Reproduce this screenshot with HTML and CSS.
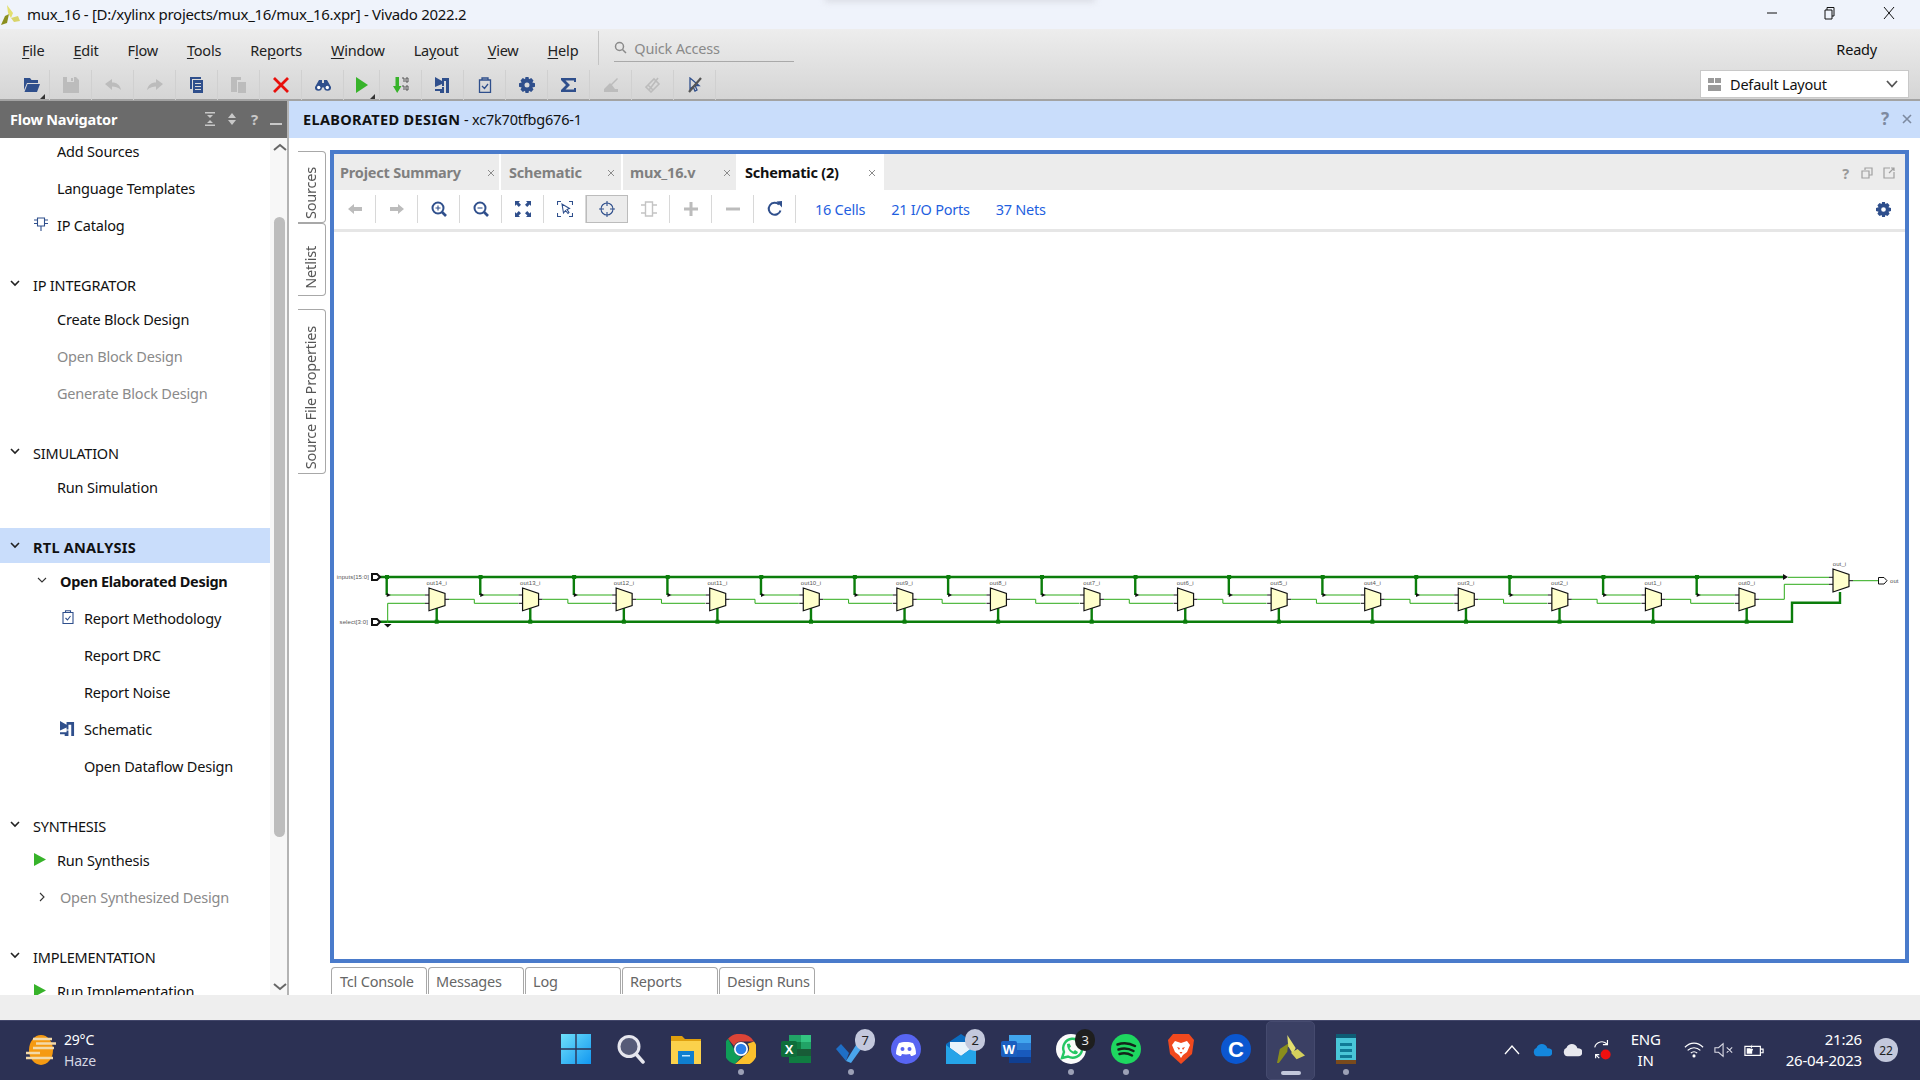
FILE: index.html
```html
<!DOCTYPE html>
<html lang="en">
<head>
<meta charset="utf-8">
<title>mux_16 - Vivado 2022.2</title>
<link rel="stylesheet" href="styles.css">
</head>
<body>
<svg class="defs" width="0" height="0">
  <defs>
    <g id="cell">
      <path class="w-thick" d="M386.7 577V595M436.7 608V621.7"/>
      <rect class="node" x="385" y="575" width="4" height="4"/>
      <rect class="node" x="434.7" y="619.7" width="4" height="4"/>
      <path class="w-black" d="M386.7 593V597L391 595Z"/>
      <path class="w-thin" d="M390 595H425"/>
      <path class="w-stub" d="M425 595H429M425 603.3H429M445 599.3H449"/>
      <path class="mux" d="M429 588L445 593.5V605.5L429 610.7Z"/>
    </g>
    <path id="wire" class="w-thin" d="M449 599.3H474.3V603.3H518"/>
    <linearGradient id="winG" x1="0" y1="0" x2="1" y2="1"><stop offset="0" stop-color="#6fe0fb"/><stop offset="1" stop-color="#1297f0"/></linearGradient>
  </defs>
</svg>

<header class="titlebar">
  <svg class="applogo" viewBox="0 0 20 20"><path fill="#8a8f1f" d="M1 20L5 11L9 9L7 18Z"/><path fill="#e3df6e" d="M7 0L13 8L11 13L8 8Z"/><path fill="#d8d46a" d="M11 13L18 11L20 16L14 17Z"/></svg>
  <span class="titletext">mux_16 - [D:/xylinx projects/mux_16/mux_16.xpr] - Vivado 2022.2</span>
  <div class="winbtns">
    <svg class="winbtn" viewBox="0 0 14 14"><path d="M2 7H12" class="win-s"/></svg>
    <svg class="winbtn" viewBox="0 0 14 14"><path d="M3 4H10V13H3ZM5 4V1.5H12V10H10" class="win-s"/></svg>
    <svg class="winbtn last" viewBox="0 0 14 14"><path d="M2 1L12 13M12 1L2 13" class="win-s"/></svg>
  </div>
  <div class="topshadow"></div>
</header>

<section class="menubar">
  <div class="menurow">
    <nav class="menus">
      <span><u>F</u>ile</span><span><u>E</u>dit</span><span>F<u>l</u>ow</span><span><u>T</u>ools</span><span>Re<u>p</u>orts</span><span><u>W</u>indow</span><span>La<u>y</u>out</span><span><u>V</u>iew</span><span><u>H</u>elp</span>
    </nav>
    <div class="quick">
      <svg class="qicon" viewBox="0 0 14 14"><circle cx="5.5" cy="5.5" r="4" class="q-s"/><path d="M8.5 8.5L12 12" class="q-s"/></svg>
      <span>Quick Access</span>
    </div>
    <span class="ready">Ready</span>
  </div>
  <div class="toolrow">
    <div class="tools">
      <div class="tool narrow">
        <svg class="ic16" viewBox="0 0 16 16"><path class="f-b" d="M0 1H6L7.500 3H14V6H3L0 13Z"/><path class="f-b" d="M3.500 7H16L13 15H0.500Z"/></svg>
        <i class="drop"></i>
      </div>
      <div class="tool"><svg class="ic16" viewBox="0 0 16 16"><path class="f-d" d="M0 0H4V5H11V0H13L16 3V16H0ZM8 1H10V4H8Z"/></svg></div>
      <div class="tool"><svg class="ic16" viewBox="0 0 16 16"><path class="f-d" d="M0 7L7 2V5.500C12 5.500 15 8 16 13C13 10 10 9.500 7 9.500V13Z"/></svg></div>
      <div class="tool"><svg class="ic16" viewBox="0 0 16 16"><path class="f-d" d="M16 7L9 2V5.500C4 5.500 1 8 0 13C3 10 6 9.500 9 9.500V13Z"/></svg></div>
      <div class="tool"><svg class="ic16" viewBox="0 0 16 16"><path class="f-b" d="M1 0H12V2H3V12H1Z"/><path class="f-b" d="M4 3H14V16H4ZM6 6V7H12V6ZM6 9V10H12V9ZM6 12V13H12V12Z"/></svg></div>
      <div class="tool"><svg class="ic16" viewBox="0 0 16 16"><path class="f-d" d="M0 0H10V3H6V15H0Z"/><path class="f-d" d="M7 5H15V16H7Z"/></svg></div>
      <div class="tool"><svg class="ic16" viewBox="0 0 16 16"><path d="M1 1L15 15M15 1L1 15" class="x-red"/></svg></div>
      <div class="tool"><svg class="ic16" viewBox="0 0 16 16"><path class="f-b" d="M4 3H7V6H9V3H12L16 10A3.500 3.500 0 1 1 9 10.500H7A3.500 3.500 0 1 1 0 10Z"/><circle cx="3.700" cy="10.500" r="1.700" fill="#fff"/><circle cx="12.300" cy="10.500" r="1.700" fill="#fff"/></svg></div>
      <div class="tool narrow"><svg class="ic16" viewBox="0 0 16 16"><path class="f-g" d="M2 0L14 8L2 16Z"/></svg><i class="drop"></i></div>
      <div class="tool"><svg class="ic16" viewBox="0 0 16 16"><path class="f-g" d="M2.500 0H6V9H8.500L4.200 16L0 9H2.500Z"/><path class="s-n" d="M9 1H11V5M13 1H15V5H13ZM9 9H11V13M13 9H15V13H13Z"/></svg></div>
      <div class="tool"><svg class="ic16" viewBox="0 0 16 16"><path class="f-b" d="M0 0L7 4V1H14V16H11V4H9V9H7V7L0 10ZM0 12H7V10H9V16H5V14H0Z"/></svg></div>
      <div class="tool"><svg class="ic16" viewBox="0 0 16 16"><path class="s-b" d="M2.500 3H13.500V15.500H2.500ZM5 3V1H11V3ZM5 9L7.500 11.500L11 7"/></svg></div>
      <div class="tool"><svg class="ic16" viewBox="0 0 16 16"><path class="f-b" fill-rule="evenodd" d="M6.500 0H9.500L10 2.200L12.200 1.100L14.500 3.500L13.300 5.600L16 6.300V9.700L13.300 10.400L14.500 12.500L12.200 14.900L10 13.800L9.500 16H6.500L6 13.800L3.800 14.900L1.500 12.500L2.700 10.400L0 9.700V6.300L2.700 5.600L1.500 3.500L3.800 1.100L6 2.200ZM8 5.500A2.500 2.500 0 1 0 8 10.500A2.500 2.500 0 1 0 8 5.500Z"/></svg></div>
      <div class="tool"><svg class="ic16" viewBox="0 0 16 16"><path class="f-b" d="M0 1H15V5H13V3.500H4.500L9 8L4.500 12.500H13V11H15V15H0V13L5 8L0 3Z"/></svg></div>
      <div class="tool"><svg class="ic16" viewBox="0 0 16 16"><path class="f-d" d="M4 3L8 7L14 1L15 2L9 8L12 12H15V15H1V12L7 6Z"/></svg></div>
      <div class="tool"><svg class="ic16" viewBox="0 0 16 16"><path class="s-d" d="M1 10L9 2L14 7L6 15ZM4 13L13 1M3 8L8 13"/></svg></div>
      <div class="tool"><svg class="ic16" viewBox="0 0 16 16"><path class="s-b" d="M3 1V12L6 9.500L8 14L10 13L8 8.500H12Z"/><path class="s-gr" d="M2 15L14 1"/></svg></div>
    </div>
    <div class="layoutbox">
      <svg class="lay-ic" viewBox="0 0 13 13"><path fill="#9a9a9a" d="M0 0H6V5H0ZM7 0H13V5H7ZM0 7H13V13H0Z"/></svg>
      <span class="lay-text">Default Layout</span>
      <svg class="lay-ch" viewBox="0 0 12 8"><path d="M1 1L6 6.500L11 1" class="ch-s"/></svg>
    </div>
  </div>
</section>

<main class="app">
  <aside class="nav">
    <div class="navhead">
      <span class="navtitle">Flow Navigator</span>
      <svg class="nh-ic" viewBox="0 0 12 14"><path fill="#c8c8c8" d="M1 0H11V1.500H1ZM3 3H9L6 6ZM3 11H9L6 8ZM1 12.500H11V14H1Z"/></svg>
      <svg class="nh-ic" viewBox="0 0 12 14"><path fill="#c8c8c8" d="M2 6L6 1L10 6ZM2 8L6 13L10 8Z"/></svg>
      <span class="nh-q">?</span>
      <span class="nh-min"></span>
    </div>
    <div class="navbody">
      <div class="navlist">
        <div class="row">Add Sources</div>
        <div class="row">Language Templates</div>
        <div class="row"><svg class="row-ic" viewBox="0 0 14 14"><path class="s-b1" d="M3.500 1H10.500V9H3.500ZM7 9V14M0 3H3.500M0 6.500H3.500M10.500 3H14M10.500 6.500H14"/></svg>IP Catalog</div>

        <div class="head"><svg class="chev" viewBox="0 0 10 7"><path class="ch-b" d="M1 1L5 5L9 1"/></svg>IP INTEGRATOR</div>
        <div class="row">Create Block Design</div>
        <div class="row dim">Open Block Design</div>
        <div class="row dim">Generate Block Design</div>

        <div class="head"><svg class="chev" viewBox="0 0 10 7"><path class="ch-b" d="M1 1L5 5L9 1"/></svg>SIMULATION</div>
        <div class="row">Run Simulation</div>

        <div class="head active"><svg class="chev" viewBox="0 0 10 7"><path class="ch-b" d="M1 1L5 5L9 1"/></svg>RTL ANALYSIS</div>
        <div class="row sub bold"><svg class="chev2" viewBox="0 0 10 7"><path class="ch-t" d="M1 1L5 5L9 1"/></svg>Open Elaborated Design</div>
        <div class="row deep"><svg class="deep-ic" viewBox="0 0 12 14"><path class="s-b1" d="M1 2.500H11V13.500H1ZM3.500 2.500V0.700H8.500V2.500M3.500 8L5.500 10L8.500 6"/></svg>Report Methodology</div>
        <div class="row deep">Report DRC</div>
        <div class="row deep">Report Noise</div>
        <div class="row deep"><svg class="deep-ic wide" viewBox="0 0 16 16"><path class="f-b" d="M0 0L7 4V1H15V16H12V4H9V9H7V7L0 10ZM0 12H7V10H9V16H5V14H0Z"/></svg>Schematic</div>
        <div class="row deep">Open Dataflow Design</div>

        <div class="head"><svg class="chev" viewBox="0 0 10 7"><path class="ch-b" d="M1 1L5 5L9 1"/></svg>SYNTHESIS</div>
        <div class="row"><svg class="play-ic" viewBox="0 0 12 13"><path class="f-g" d="M0 0L12 6.500L0 13Z"/></svg>Run Synthesis</div>
        <div class="row sub dim"><svg class="chev2 side" viewBox="0 0 7 10"><path class="ch-t" d="M1 1L5 5L1 9"/></svg>Open Synthesized Design</div>

        <div class="head"><svg class="chev" viewBox="0 0 10 7"><path class="ch-b" d="M1 1L5 5L9 1"/></svg>IMPLEMENTATION</div>
        <div class="row"><svg class="play-ic" viewBox="0 0 12 13"><path class="f-g" d="M0 0L12 6.500L0 13Z"/></svg>Run Implementation</div>
      </div>
      <div class="scroll">
        <svg class="sc-ch" viewBox="0 0 14 9"><path class="sc-s" d="M1 7L7 2L13 7"/></svg>
        <div class="thumb"></div>
        <svg class="sc-ch down" viewBox="0 0 14 9"><path class="sc-s" d="M1 2L7 7L13 2"/></svg>
      </div>
    </div>
  </aside>

  <div class="right">
    <div class="banner">
      <span><b>ELABORATED DESIGN</b> - xc7k70tfbg676-1</span>
      <span class="ban-q">?</span>
      <svg class="ban-x" viewBox="0 0 10 10"><path class="bx-s" d="M1 1L9 9M9 1L1 9"/></svg>
    </div>
    <div class="work">
      <div class="vtabs">
        <div class="vtab t1"><span>Sources</span></div>
        <div class="vtab t2"><span>Netlist</span></div>
        <div class="vtab t3"><span>Source File Properties</span></div>
      </div>
      <div class="center">
        <div class="frame">
          <div class="tabbar">
            <div class="tab w1"><span class="tt">Project Summary</span><svg class="tx" viewBox="0 0 8 8"><path d="M1 1L7 7M7 1L1 7"/></svg></div>
            <div class="tab w2"><span class="tt">Schematic</span><svg class="tx" viewBox="0 0 8 8"><path d="M1 1L7 7M7 1L1 7"/></svg></div>
            <div class="tab w3"><span class="tt">mux_16.v</span><svg class="tx" viewBox="0 0 8 8"><path d="M1 1L7 7M7 1L1 7"/></svg></div>
            <div class="tab w4 on"><span class="tt">Schematic (2)</span><svg class="tx" viewBox="0 0 8 8"><path d="M1 1L7 7M7 1L1 7"/></svg></div>
            <div class="tabtools">
              <span class="tq">?</span>
              <svg class="tc" viewBox="0 0 12 12"><path d="M4 3V1H11V8H8.500M1 4H8V11H1Z"/></svg>
              <svg class="tc" viewBox="0 0 12 12"><path d="M7 1H1V11H11V5M6 6L11 1M8 1H11V4"/></svg>
            </div>
          </div>
          <div class="subbar">
            <div class="st"><svg class="ic16" viewBox="0 0 16 16"><path class="f-d" d="M1 8L7 3V6H15V10H7V13Z"/></svg></div>
            <div class="st"><svg class="ic16" viewBox="0 0 16 16"><path class="f-d" d="M15 8L9 3V6H1V10H9V13Z"/></svg></div>
            <div class="st"><svg class="ic16" viewBox="0 0 16 16"><circle class="s-b2" cx="7" cy="7" r="5.500"/><path class="s-b1" d="M7 4.500V9.500M4.500 7H9.500"/><path class="s-b3" d="M11 11L15 15"/></svg></div>
            <div class="st"><svg class="ic16" viewBox="0 0 16 16"><circle class="s-b2" cx="7" cy="7" r="5.500"/><path class="s-b1" d="M4.500 7H9.500"/><path class="s-b3" d="M11 11L15 15"/></svg></div>
            <div class="st"><svg class="ic16" viewBox="0 0 16 16"><path class="f-b" d="M0 0H5L3.600 1.400L6 3.800L3.800 6L1.400 3.600L0 5ZM16 0V5L14.600 3.600L12.200 6L10 3.800L12.400 1.400L11 0ZM0 16V11L1.400 12.400L3.800 10L6 12.200L3.600 14.600L5 16ZM16 16H11L12.400 14.600L10 12.200L12.200 10L14.600 12.400L16 11Z"/></svg></div>
            <div class="st"><svg class="ic16" viewBox="0 0 16 16"><path class="s-b1" d="M0.500 4V0.500H4M12 0.500H15.500V4M0.500 12V15.500H4M12 15.500H15.500V12"/><path class="s-b1" d="M5 3L6.500 12L8.500 9.500L11 12.500L12 11.500L10 8.500L12.500 7.500Z"/></svg></div>
            <div class="st pressed"><svg class="ic16" viewBox="0 0 16 16"><circle class="s-b1" cx="8" cy="8" r="6"/><path class="s-b1" d="M8 0V5M8 11V16M0 8H5M11 8H16"/></svg></div>
            <div class="st"><svg class="ic16" viewBox="0 0 16 16"><path class="s-d1" d="M4.500 1H11.500V15H4.500ZM0 4H4.500M0 12H4.500M11.500 4H16M11.500 12H16"/></svg></div>
            <div class="st"><svg class="ic16" viewBox="0 0 16 16"><path class="f-d" d="M6.500 1H9.500V6.500H15V9.500H9.500V15H6.500V9.500H1V6.500H6.500Z"/></svg></div>
            <div class="st"><svg class="ic16" viewBox="0 0 16 16"><path class="f-d" d="M1 6.500H15V9.500H1Z"/></svg></div>
            <div class="st"><svg class="ic16" viewBox="0 0 16 16"><path class="s-b2" d="M13.500 9.500A6 6 0 1 1 12 3.500"/><path class="f-b" d="M9.500 0.500L15 0V6.500Z"/></svg></div>
            <div class="links"><a>16 Cells</a><a>21 I/O Ports</a><a>37 Nets</a></div>
            <svg class="gear" viewBox="0 0 16 16"><path class="f-b" fill-rule="evenodd" d="M6.500 0H9.500L10 2.200L12.200 1.100L14.500 3.500L13.300 5.600L16 6.300V9.700L13.300 10.400L14.500 12.500L12.200 14.900L10 13.800L9.500 16H6.500L6 13.800L3.800 14.900L1.500 12.500L2.700 10.400L0 9.700V6.300L2.700 5.600L1.500 3.500L3.800 1.100L6 2.200ZM8 5.500A2.500 2.500 0 1 0 8 10.500A2.500 2.500 0 1 0 8 5.500Z"/></svg>
          </div>
          <svg class="schem" viewBox="334 232 1571 727" preserveAspectRatio="xMinYMin meet">
            <path class="w-bus" d="M380 577H1785"/>
            <path class="w-bus" d="M380 621.700H1792V602.700H1840V592"/>
            <path class="w-thin" d="M387.700 603.300H425M387.700 603.300V623"/>
            <path class="w-black" d="M384 624H391.500L387.700 627.500Z"/>
            <use href="#cell"/>
            <use href="#wire"/><use href="#cell" x="93.570"/>
            <use href="#wire" x="93.570"/><use href="#cell" x="187.140"/>
            <use href="#wire" x="187.140"/><use href="#cell" x="280.710"/>
            <use href="#wire" x="280.710"/><use href="#cell" x="374.280"/>
            <use href="#wire" x="374.280"/><use href="#cell" x="467.850"/>
            <use href="#wire" x="467.850"/><use href="#cell" x="561.420"/>
            <use href="#wire" x="561.420"/><use href="#cell" x="654.990"/>
            <use href="#wire" x="654.990"/><use href="#cell" x="748.560"/>
            <use href="#wire" x="748.560"/><use href="#cell" x="842.130"/>
            <use href="#wire" x="842.130"/><use href="#cell" x="935.700"/>
            <use href="#wire" x="935.700"/><use href="#cell" x="1029.270"/>
            <use href="#wire" x="1029.270"/><use href="#cell" x="1122.840"/>
            <use href="#wire" x="1122.840"/><use href="#cell" x="1216.410"/>
            <use href="#wire" x="1216.410"/><use href="#cell" x="1309.980"/>
            <path class="w-thin" d="M1759 599.300H1784.300V584.300H1829M1788 577.300H1829M1853 580.700H1878"/>
            <path class="w-stub" d="M1829 577.300H1833M1829 584.300H1833M1849 580.700H1853"/>
            <path class="w-black" d="M1783 574L1788 577L1783 580Z"/>
            <path class="mux" d="M1833 569L1849 574.500V586.500L1833 592Z"/>
            <path class="port out" d="M1878.500 577.500H1884L1887 580.700L1884 584H1878.500Z"/>
            <path class="port" d="M372 574H377L380 577L377 580H372Z"/>
            <path class="port" d="M372 619H377L380 622L377 625H372Z"/>
            <text class="lbl end" x="369" y="579">inputs[15:0]</text>
            <text class="lbl end" x="368" y="624">select[3:0]</text>
            <text class="lbl" x="1890" y="583">out</text>
            <text class="lbl mid" x="1839.500" y="566">out_i</text>
            <text class="lbl mid" x="436.700" y="585">out14_i</text>
            <text class="lbl mid" x="530.300" y="585">out13_i</text>
            <text class="lbl mid" x="623.900" y="585">out12_i</text>
            <text class="lbl mid" x="717.400" y="585">out11_i</text>
            <text class="lbl mid" x="811" y="585">out10_i</text>
            <text class="lbl mid" x="904.600" y="585">out9_i</text>
            <text class="lbl mid" x="998.100" y="585">out8_i</text>
            <text class="lbl mid" x="1091.700" y="585">out7_i</text>
            <text class="lbl mid" x="1185.300" y="585">out6_i</text>
            <text class="lbl mid" x="1278.800" y="585">out5_i</text>
            <text class="lbl mid" x="1372.400" y="585">out4_i</text>
            <text class="lbl mid" x="1466" y="585">out3_i</text>
            <text class="lbl mid" x="1559.500" y="585">out2_i</text>
            <text class="lbl mid" x="1653.100" y="585">out1_i</text>
            <text class="lbl mid" x="1746.700" y="585">out0_i</text>
          </svg>
        </div>
        <div class="btabs">
          <div class="btab">Tcl Console</div>
          <div class="btab">Messages</div>
          <div class="btab">Log</div>
          <div class="btab">Reports</div>
          <div class="btab">Design Runs</div>
        </div>
      </div>
    </div>
  </div>
</main>
<div class="status"></div>

<footer class="taskbar">
  <div class="weather">
    <svg class="wx" viewBox="0 0 32 32"><ellipse cx="16" cy="16" rx="12" ry="15" fill="#f59a12"/><path d="M8 5H27M11 9.500H31M8 14H29M1 19H15M1 24H28" stroke="#f3d9a8" stroke-width="2.400" fill="none"/></svg>
    <div class="wtext"><span>29°C</span><span class="haze">Haze</span></div>
  </div>
  <div class="apps">
    <div class="app-i"><svg class="tb" viewBox="0 0 30 30"><path fill="url(#winG)" d="M0 0H14.300V14.300H0ZM15.700 0H30V14.300H15.700ZM0 15.700H14.300V30H0ZM15.700 15.700H30V30H15.700Z"/></svg></div>
    <div class="app-i"><svg class="tb" viewBox="0 0 30 30"><circle cx="13" cy="12.500" r="10" fill="#565b78" stroke="#e6e6ee" stroke-width="3"/><path d="M20 20L27 28" stroke="#e6e6ee" stroke-width="3.500" stroke-linecap="round"/></svg></div>
    <div class="app-i"><svg class="tb" viewBox="0 0 30 30"><path fill="#e0a00e" d="M0 2H11L14 5H30V12H0Z"/><path fill="#fbd14b" d="M0 7H30V30H0Z"/><path fill="#0f7fd0" d="M7 17H23V30H7Z"/><path fill="#bfe6ff" d="M11 21H19V22.500H11Z"/></svg></div>
    <div class="app-i"><svg class="tb" viewBox="0 0 30 30"><path fill="#db4437" d="M15 0A15 15 0 0 1 28 7.500H15A7.500 7.500 0 0 0 8 12L2 4.800A15 15 0 0 1 15 0Z"/><path fill="#0f9d58" d="M2 4.800L8 15A7.500 7.500 0 0 0 15.500 22.500L9 30A15 15 0 0 1 2 4.800Z"/><path fill="#fbc02d" d="M28 7.500A15 15 0 0 1 9 30L21.500 18.700A7.500 7.500 0 0 0 21.500 9.700Z"/><circle cx="15" cy="15" r="7" fill="#fff"/><circle cx="15" cy="15" r="5.300" fill="#2c7fe8"/></svg><i class="dot"></i></div>
    <div class="app-i"><svg class="tb" viewBox="0 0 30 30"><path fill="#21a366" d="M8 1H20V8H8Z"/><path fill="#33c481" d="M20 1H30V8H20Z"/><path fill="#107c41" d="M8 8H20V15H8ZM8 22H30V29H8Z"/><path fill="#21a366" d="M20 8H30V15H20Z"/><path fill="#185c37" d="M8 15H20V22H8ZM20 15H30V22H20Z"/><rect y="7" width="16" height="16" rx="2" fill="#0f6e3b"/><text x="8" y="20" class="tb-l">X</text></svg></div>
    <div class="app-i"><svg class="tb" viewBox="0 0 30 30"><path fill="#1f6fc6" d="M0 15L5 10L13 19L10 27Z"/><path fill="#4aa6ec" d="M10 27L25 3L30 8L15 29Z"/></svg><b class="badge">7</b><i class="dot"></i></div>
    <div class="app-i"><svg class="tb" viewBox="0 0 30 30"><circle cx="15" cy="15" r="15" fill="#5865f2"/><path fill="#fff" d="M8 9C11 7.500 19 7.500 22 9C24 12 25 16 25 20C23 21.500 21.500 22 20 22L19 20C17 20.500 13 20.500 11 20L10 22C8.500 22 7 21.500 5 20C5 16 6 12 8 9Z"/><circle cx="11.500" cy="15" r="2" fill="#5865f2"/><circle cx="18.500" cy="15" r="2" fill="#5865f2"/></svg></div>
    <div class="app-i"><svg class="tb" viewBox="0 0 30 30"><path fill="#0b6cc0" d="M0 10L15 0L30 10V30H0Z"/><path fill="#e8f3fb" d="M4 8H26V14L15 22L4 14Z"/><path fill="#25a4e8" d="M0 11L15 22L30 11V30H0Z"/></svg><b class="badge">2</b></div>
    <div class="app-i"><svg class="tb" viewBox="0 0 30 30"><path fill="#41a5ee" d="M8 1H30V9H8Z"/><path fill="#2b7cd3" d="M8 9H30V16H8Z"/><path fill="#185abd" d="M8 16H30V23H8Z"/><path fill="#103f91" d="M8 23H30V29H8Z"/><rect y="7" width="16" height="16" rx="2" fill="#1a5fc0"/><text x="8" y="20" class="tb-l">W</text></svg></div>
    <div class="app-i"><svg class="tb" viewBox="0 0 30 30"><circle cx="15" cy="15" r="15" fill="#fbfbfb"/><path fill="none" stroke="#25c764" stroke-width="2.400" d="M6 24L8 18A9.500 9.500 0 1 1 12 22.500Z"/><path fill="#25c764" d="M11 10L13.500 9.500L15 12.500L13.500 14C14.500 16 16 17 17.500 17.500L19 16L22 18L21 20C17 21 11 17 11 10Z"/></svg><b class="badge dark">3</b><i class="dot"></i></div>
    <div class="app-i"><svg class="tb" viewBox="0 0 30 30"><circle cx="15" cy="15" r="15" fill="#1ed760"/><path d="M6.500 10.500C12 8.500 18.500 9 24 12M7.500 15.500C12 14 18 14.500 22.500 17M8.500 20C12 19 17.500 19.500 21 21.500" fill="none" stroke="#14241a" stroke-width="2.500" stroke-linecap="round"/></svg><i class="dot"></i></div>
    <div class="app-i"><svg class="tb" viewBox="0 0 30 30"><path fill="#f1491e" d="M7 0H23L28 6L26 20L15 30L4 20L2 6Z"/><path fill="#fff" d="M9 7L15 9L21 7L24 11L21 18L17 21L15 24L13 21L9 18L6 11Z"/><path fill="#f1491e" d="M11 13L14 14L13 16ZM19 13L16 14L17 16ZM13.500 18H16.500L15 20Z"/></svg></div>
    <div class="app-i"><svg class="tb" viewBox="0 0 30 30"><circle cx="15" cy="15" r="15" fill="#0b57d0"/><text x="15" y="23" class="tb-c">C</text></svg></div>
    <div class="app-i current"><svg class="tb" viewBox="0 0 30 30"><path fill="#e3df6e" d="M11 0L20 14L17 20L12 12Z"/><path fill="#8b8e1c" d="M0 30L3 15L12 9L11 18L2 30Z"/><path fill="#d4d05c" d="M15 19L22 15L30 22L21 26Z"/></svg><i class="bar"></i></div>
    <div class="app-i"><svg class="tb" viewBox="0 0 30 30"><path fill="#49c6d8" d="M5 2H25V26H5Z"/><path fill="#7a4a1c" d="M5 26H25V30H5Z"/><path fill="#0f7a96" d="M9 9H21V12H9ZM9 15H21V18H9ZM9 21H21V24H9Z"/><path fill="#0e5c74" d="M5 0H25V4H5Z"/></svg><i class="dot"></i></div>
  </div>
  <div class="tray">
    <svg class="ti" viewBox="0 0 18 18"><path d="M2 13L9 5L16 13" class="tr-s"/></svg>
    <svg class="ti" viewBox="0 0 22 18"><path fill="#1487de" d="M6 16A5 5 0 0 1 5 6.500C7 1 15 1 17 7A5 4.500 0 0 1 18 16Z"/></svg>
    <svg class="ti" viewBox="0 0 22 18"><path fill="#e8e8ee" d="M6 16A5 5 0 0 1 5 6.500C7 1 15 1 17 7A5 4.500 0 0 1 18 16Z"/></svg>
    <svg class="ti sync" viewBox="0 0 22 24"><path class="tr-s" d="M3 9A8 8 0 0 1 17 6M17 1V6H12M4 17L8 21M4 21V17H8"/><circle cx="15" cy="17" r="5.500" fill="#f01010"/></svg>
    <div class="lang"><span>ENG</span><span>IN</span></div>
    <svg class="ti" viewBox="0 0 22 18"><path class="tr-s" d="M1 6C7 0 15 0 21 6M4 9.500C8 5.500 14 5.500 18 9.500M7.500 12.500C9.500 10.500 12.500 10.500 14.500 12.500"/><circle cx="11" cy="15.500" r="1.700" fill="#fff"/></svg>
    <svg class="ti" viewBox="0 0 22 18"><path class="tr-t" d="M1 6.500H5L10 2V16L5 11.500H1ZM14 6L20 12M20 6L14 12"/></svg>
    <svg class="ti" viewBox="0 0 22 18"><path class="tr-s" d="M1 5H18V15H1ZM18 8H21V12H18Z"/><path fill="#fff" d="M3 7H9V13H3ZM9 2L7 8H10L8 13"/></svg>
    <div class="clock"><span>21:26</span><span>26-04-2023</span></div>
    <span class="count">22</span>
  </div>
</footer>
</body>
</html>
```
FILE: styles.css
```css
* { box-sizing: border-box; }
html, body { margin: 0; padding: 0; }
body {
  width: 1920px;
  height: 1080px;
  overflow: hidden;
  background: #fff;
  color: #111;
  font: 14.5px/20px "Noto Sans", "Open Sans", sans-serif;
  letter-spacing: -0.2px;
  display: flex;
  flex-direction: column;
}
.defs { position: absolute; }
svg { display: block; flex: none; }
u { text-underline-offset: 2px; }

/* title bar */
.titlebar { height: 29px; flex: none; background: #eff3fb; display: flex; align-items: center; position: relative; }
.applogo { width: 20px; height: 20px; margin-right: 7px; }
.titletext { font-size: 15px; letter-spacing: -0.3px; color: #111; padding-bottom: 2px; }
.winbtns { margin-left: auto; display: flex; gap: 43px; padding: 0 24px 3px 0; }
.winbtn { width: 14px; height: 14px; }
.winbtn.last { margin-left: 3px; }
.win-s { fill: none; stroke: #111; stroke-width: 1; }
.topshadow { position: absolute; left: 825px; top: -6px; width: 270px; height: 8px; background: #d9dce4; filter: blur(3px); }

/* menu and main toolbar */
.menubar { height: 72px; flex: none; background: linear-gradient(#ededed, #d5d5d5); border-bottom: 2px solid #a3a3a3; }
.menurow { height: 40px; display: flex; align-items: flex-start; padding-left: 22px; }
.menus { display: flex; gap: 29px; padding-top: 11px; color: #222; }
.quick { width: 196px; height: 34px; margin: 2px 0 0 20px; padding-left: 15px; border-left: 1px solid #c4c4c4; display: flex; align-items: center; gap: 6px; color: #8a8a8a; position: relative; }
.quick::after { content: ""; position: absolute; left: 15px; right: 0; bottom: 3px; border-bottom: 1px solid #a9a9a9; }
.qicon { width: 14px; height: 14px; }
.q-s { fill: none; stroke: #8a8a8a; stroke-width: 1.5; }
.ready { margin-left: auto; padding: 10px 43px 0 0; }
.toolrow { height: 30px; display: flex; align-items: center; justify-content: space-between; padding: 2px 11px 0 14px; }
.tools { display: flex; }
.tool { width: 42px; height: 30px; display: flex; align-items: center; justify-content: center; border-right: 1px solid #d0d0d0; position: relative; }
.tool.narrow { width: 36px; }
.ic16 { width: 16px; height: 16px; }
.drop { position: absolute; right: 4px; bottom: 1px; width: 0; height: 0; border-left: 5px solid transparent; border-bottom: 5px solid #333; }
.f-b { fill: #2f4f8c; }
.f-d { fill: #bcbcbc; }
.f-g { fill: #37b32a; }
.s-b { fill: none; stroke: #2f4f8c; stroke-width: 1.3; }
.s-b1 { fill: none; stroke: #2f4f8c; stroke-width: 1.1; }
.s-b2 { fill: none; stroke: #2f4f8c; stroke-width: 2; }
.s-b3 { fill: none; stroke: #2f4f8c; stroke-width: 2.6; }
.s-d { fill: none; stroke: #bcbcbc; stroke-width: 1.6; }
.s-d1 { fill: none; stroke: #c4c4c4; stroke-width: 1.4; }
.s-gr { fill: none; stroke: #555; stroke-width: 2.2; }
.s-n { fill: none; stroke: #555; stroke-width: 1; }
.x-red { fill: none; stroke: #e8100c; stroke-width: 2.8; }
.layoutbox { width: 209px; height: 28px; margin-top: -2px; background: #fff; border: 1px solid #c8c8c8; display: flex; align-items: center; padding: 0 10px 0 7px; }
.lay-ic { width: 13px; height: 13px; margin-right: 9px; }
.lay-text { flex: 1; color: #111; }
.lay-ch { width: 12px; height: 8px; }
.ch-s { fill: none; stroke: #555; stroke-width: 1.8; }

/* app body */
.app { height: 894px; flex: none; display: flex; }
.nav { width: 289px; flex: none; display: flex; flex-direction: column; border-right: 2px solid #b4b4b4; }
.navhead { height: 37px; flex: none; background: #6b6b6b; display: flex; align-items: center; padding: 0 0 2px 10px; color: #fff; }
.navtitle { font-weight: 700; flex: 1; }
.nh-ic { width: 12px; height: 14px; margin-right: 10px; }
.nh-q { color: #c8c8c8; font-weight: 700; font-size: 15px; margin: 0 12px 0 3px; }
.nh-min { width: 12px; height: 2px; background: #c8c8c8; margin: 10px 5px 0 0; }
.navbody { flex: 1; min-height: 0; display: flex; overflow: hidden; }
.navlist { width: 270px; flex: none; margin-top: -5px; }
.row { height: 37px; display: flex; align-items: center; padding: 0 0 2px 57px; position: relative; white-space: nowrap; }
.head { height: 35px; margin-top: 22px; display: flex; align-items: center; padding: 2px 0 0 33px; position: relative; }
.head.active { background: #c9ddfb; font-weight: 700; letter-spacing: 0.25px; }
.dim { color: #8a8a8a; }
.row.sub { padding-left: 60px; }
.row.deep { padding-left: 84px; }
.bold { font-weight: 700; letter-spacing: -0.3px; }
.row-ic { position: absolute; left: 34px; top: 10px; width: 14px; height: 14px; }
.deep-ic { position: absolute; left: 62px; top: 10px; width: 12px; height: 14px; }
.deep-ic.wide { left: 60px; width: 15px; height: 15px; }
.play-ic { position: absolute; left: 34px; top: 11px; width: 12px; height: 13px; }
.chev { position: absolute; left: 10px; top: 14px; width: 10px; height: 7px; }
.chev2 { position: absolute; left: 37px; top: 14px; width: 10px; height: 7px; }
.chev2.side { left: 39px; top: 13px; width: 7px; height: 10px; }
.ch-b { fill: none; stroke: #222; stroke-width: 1.6; }
.ch-t { fill: none; stroke: #333; stroke-width: 1.1; }
.scroll { flex: 1; background: #f7f7f7; display: flex; flex-direction: column; align-items: center; padding: 5px 0 0 2px; }
.sc-ch { width: 14px; height: 9px; }
.sc-ch.down { margin-top: auto; margin-bottom: 4px; }
.sc-s { fill: none; stroke: #666; stroke-width: 2; }
.thumb { width: 11px; height: 620px; margin-top: 65px; border-radius: 6px; background: #bdbdbd; }

.right { flex: 1; min-width: 0; display: flex; flex-direction: column; }
.banner { height: 37px; flex: none; background: #c9ddfb; display: flex; align-items: center; padding: 0 8px 2px 14px; }
.banner > span:first-child { flex: 1; }
.banner b { letter-spacing: 0.35px; }
.ban-q { color: #7d8aa0; font-weight: 700; font-size: 17px; margin-right: 13px; }
.ban-x { width: 10px; height: 10px; }
.bx-s { fill: none; stroke: #7d8aa0; stroke-width: 1.6; }
.work { flex: 1; min-height: 0; display: flex; padding: 12px 11px 0 9px; }
.vtabs { width: 32px; flex: none; padding-top: 1px; }
.vtab { width: 28px; border: 1px solid #a8a8a8; border-left: 0; border-radius: 0 4px 4px 0; display: flex; justify-content: center; align-items: center; color: #555; padding-right: 4px; }
.vtab span { writing-mode: vertical-rl; transform: rotate(180deg); }
.t1 { height: 72px; padding-top: 12px; }
.t2 { height: 73px; padding-top: 16px; }
.t3 { height: 165px; margin-top: 13px; padding-top: 12px; }
.center { flex: 1; min-width: 0; display: flex; flex-direction: column; }
.frame { height: 813px; flex: none; border: 4px solid #4a7bcb; display: flex; flex-direction: column; background: #fff; }
.tabbar { height: 36px; flex: none; background: #ececec; display: flex; }
.tab { position: relative; display: flex; align-items: center; font-weight: 700; color: #808080; border-right: 2px solid #fff; }
.tab.on { background: #fff; color: #111; }
.w1 { width: 167px; padding-left: 6px; }
.w2 { width: 122px; padding-left: 8px; }
.w3 { width: 115px; padding-left: 7px; }
.w4 { width: 146px; padding-left: 7px; border-right: 0; }
.tx { position: absolute; right: 6px; top: 15px; width: 8px; height: 8px; fill: none; stroke: #8c8c8c; stroke-width: 1; }
.w1 .tx { right: 4px; }
.w3 .tx { right: 5px; }
.w4 .tx { right: 8px; }
.tabtools { margin-left: auto; display: flex; align-items: center; gap: 10px; padding: 2px 10px 0 0; color: #999; }
.tq { font-weight: 700; margin-right: 2px; }
.tc { width: 12px; height: 12px; fill: none; stroke: #a0a0a0; stroke-width: 1.2; }
.subbar { flex: none; display: flex; align-items: center; border-bottom: 3px solid #e6e6e6; height: 42px; }
.st { width: 42px; height: 28px; display: flex; align-items: center; justify-content: center; border-right: 1px solid #d8d8d8; margin-top: -1px; }
.pressed { background: #ececec; border: 1px solid #bcbcbc; }
.links { display: flex; gap: 26px; padding-left: 19px; flex: 1; color: #1f5fe0; margin-top: -1px; letter-spacing: -0.25px; }
.gear { width: 15px; height: 15px; margin: -1px 14px 0 0; }
.schem { flex: 1; min-height: 0; width: 1571px; display: block; }
.w-bus { fill: none; stroke: #0b7d0b; stroke-width: 2.400; }
.w-thick { fill: none; stroke: #0b7d0b; stroke-width: 2.400; }
.w-thin { fill: none; stroke: #2cab18; stroke-width: 1; }
.w-stub { fill: none; stroke: #111; stroke-width: 1; }
.w-black { fill: #111; }
.node { fill: #0b7d0b; }
.mux { fill: #ffffcc; stroke: #111; stroke-width: 1.2; }
.port { fill: #fff; stroke: #111; stroke-width: 2; }
.port.out { stroke-width: 1; }
.lbl { font: 6px "Liberation Sans", sans-serif; fill: #555; letter-spacing: 0.1px; }
.end { text-anchor: end; }
.mid { text-anchor: middle; }
.btabs { display: flex; gap: 1px; padding: 4px 0 0 1px; }
.btab { width: 96px; height: 27px; border: 1px solid #a8a8a8; border-bottom: 0; border-radius: 4px 4px 0 0; padding: 3px 0 0 7px; color: #666; }
.btab:first-child { padding-left: 8px; }

.status { height: 25px; flex: none; background: #eeeeee; }

/* taskbar */
.taskbar { height: 60px; flex: none; background: #2c3154; border-top: 1px solid #42466a; display: flex; align-items: center; color: #fff; font-size: 14px; line-height: 21px; letter-spacing: -0.2px; }
.weather { width: 548px; flex: none; display: flex; align-items: center; padding-left: 25px; gap: 7px; margin-top: -1px; }
.wx { width: 32px; height: 32px; }
.wtext { display: flex; flex-direction: column; }
.haze { color: #d4d6e2; }
.apps { display: flex; }
.app-i { width: 55px; height: 59px; display: flex; align-items: center; justify-content: center; position: relative; padding-bottom: 3px; }
.tb { width: 30px; height: 30px; }
.tb-l { font: 700 13px "Liberation Sans", sans-serif; fill: #fff; text-anchor: middle; letter-spacing: 0; }
.tb-c { font: 700 22px "Liberation Sans", sans-serif; fill: #fff; text-anchor: middle; letter-spacing: 0; }
.dot { position: absolute; left: 25px; top: 48px; width: 6px; height: 6px; border-radius: 3px; background: #9ca0b6; }
.badge { position: absolute; left: 32px; top: 8px; width: 20px; height: 22px; border-radius: 11px; background: #c3c8dc; color: #222; font-weight: 400; font-size: 13px; display: flex; align-items: center; justify-content: center; }
.badge.dark { background: #1e1e1e; color: #e8e8e8; }
.current { background: #3b4064; border-radius: 5px; width: 49px; margin: 0 3px; border: 1px solid #454a6e; }
.current .tb { width: 28px; }
.bar { position: absolute; left: 14px; top: 49px; width: 20px; height: 4px; border-radius: 2px; background: #c3c8dc; }
.tray { margin-left: auto; display: flex; align-items: center; gap: 10px; padding-right: 22px; font-size: 15px; margin-top: -1px; }
.ti { width: 20px; height: 18px; }
.ti.sync { height: 22px; }
.tr-s { fill: none; stroke: #fff; stroke-width: 1.300; }
.tr-t { fill: none; stroke: #dcdce6; stroke-width: 1.200; }
.lang { display: flex; flex-direction: column; align-items: center; margin: 0 13px 0 9px; }
.clock { display: flex; flex-direction: column; align-items: flex-end; margin-left: 12px; }
.count { width: 24px; height: 24px; border-radius: 12px; background: #c3c8dc; color: #222; font-size: 12px; display: flex; align-items: center; justify-content: center; margin-left: 2px; }
```
